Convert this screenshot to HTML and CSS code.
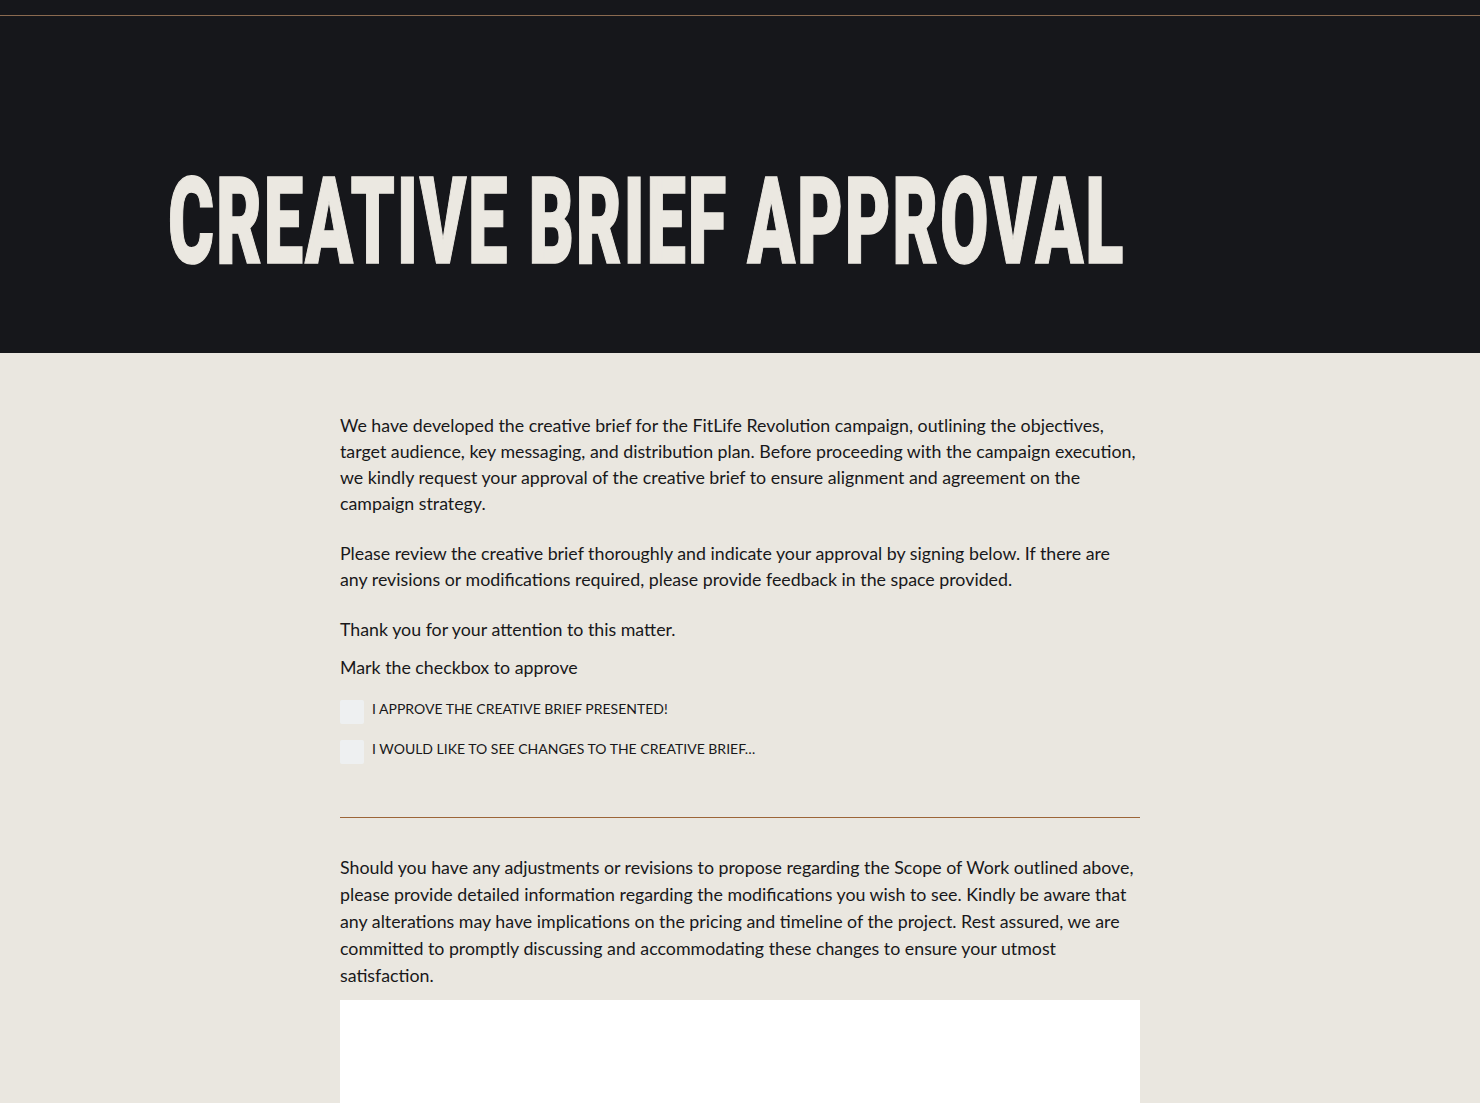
FILE: index.html
```html
<!DOCTYPE html>
<html lang="en">
<head>
<meta charset="utf-8">
<title>Creative Brief Approval</title>
<link rel="stylesheet" href="styles.css">
</head>
<body>
<header class="hero">
  <div class="topbar"></div>
  <div class="hero-inner">
    <h1 class="title"><span class="title-text">CREATIVE BRIEF APPROVAL</span></h1>
  </div>
</header>
<main class="content">
  <div class="column">
    <p class="para">We have developed the creative brief for the FitLife Revolution campaign, outlining the objectives, target audience, key messaging, and distribution plan. Before proceeding with the campaign execution, we kindly request your approval of the creative brief to ensure alignment and agreement on the campaign strategy.</p>
    <p class="para">Please review the creative brief thoroughly and indicate your approval by signing below. If there are any revisions or modifications required, please provide feedback in the space provided.</p>
    <p class="para">Thank you for your attention to this matter.</p>
    <p class="para mark">Mark the checkbox to approve</p>
    <div class="checks">
      <label class="check"><span class="box"></span><span class="check-label">I APPROVE THE CREATIVE BRIEF PRESENTED!</span></label>
      <label class="check"><span class="box"></span><span class="check-label">I WOULD LIKE TO SEE CHANGES TO THE CREATIVE BRIEF…</span></label>
    </div>
    <hr class="divider">
    <p class="para wide">Should you have any adjustments or revisions to propose regarding the Scope of Work outlined above, please provide detailed information regarding the modifications you wish to see. Kindly be aware that any alterations may have implications on the pricing and timeline of the project. Rest assured, we are committed to promptly discussing and accommodating these changes to ensure your utmost satisfaction.</p>
    <div class="textarea"></div>
  </div>
</main>
</body>
</html>
```
FILE: styles.css
```css
html, body {
  margin: 0;
  padding: 0;
}
body {
  background: #eae7e0;
  font-family: Lato, "Noto Sans", sans-serif;
  color: #18181a;
  overflow: hidden;
}
.hero {
  background: #16171b;
  height: 353px;
  overflow: hidden;
}
.topbar {
  height: 15px;
  border-bottom: 1px solid #8a6a50;
}
.hero-inner {
  padding: 0 0 0 168px;
}
.title {
  margin: 0;
  padding-top: 136px;
  font-family: Roboto, "DejaVu Sans", sans-serif;
  font-weight: 900;
  font-size: 120px;
  line-height: 140px;
  color: #ebe8e1;
  white-space: nowrap;
}
.title-text {
  display: inline-block;
  transform: scaleX(0.587);
  transform-origin: left center;
  letter-spacing: 3px;
  -webkit-text-stroke: 1.5px #ebe8e1;
}
.content {
  padding: 59px 0 0;
}
.column {
  width: 800px;
  margin: 0 auto;
}
.para {
  margin: 0 0 24px;
  font-size: 17.8px;
  line-height: 26px;
}
.para.mark {
  margin-top: -12px;
  margin-bottom: 20px;
}
.checks {
  display: flex;
  flex-direction: column;
  gap: 16px;
}
.check {
  display: flex;
  align-items: flex-start;
  gap: 8px;
}
.box {
  width: 24px;
  height: 24px;
  background: #eef0f1;
  border-radius: 2px;
  flex: none;
}
.check-label {
  font-size: 14px;
  line-height: 18px;
  color: #18181a;
}
.divider {
  border: 0;
  height: 1px;
  background: #9c6538;
  margin: 53px 0 36px;
}
.para.wide {
  line-height: 27px;
  margin-bottom: 11px;
}
.textarea {
  background: #ffffff;
  height: 200px;
}
```
